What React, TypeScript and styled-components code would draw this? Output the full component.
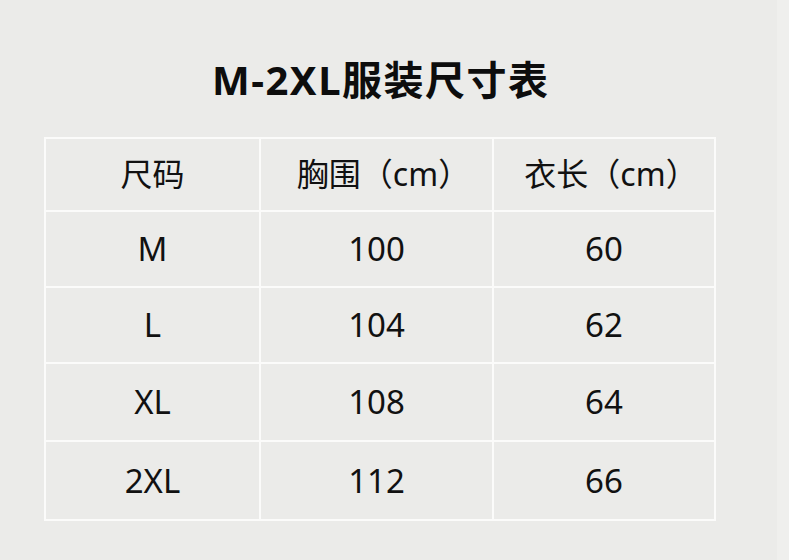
import React from "react";
import styled, { createGlobalStyle } from "styled-components";

const Global = createGlobalStyle`
  html, body {
    margin: 0;
    padding: 0;
    background: #ebebe9;
  }
  body {
    font-family: "Noto Sans", "Noto Sans CJK SC", sans-serif;
    color: #111;
  }
`;

const Page = styled.div`
  width: 789px;
  height: 560px;
  box-sizing: border-box;
  padding: 60px 0 0 44px;
  background: linear-gradient(to right, #ebebe9 0, #ebebe9 777px, #efefed 777px, #efefed 789px);
  overflow: hidden;
`;

const Sheet = styled.div`
  width: 672px;
  display: flex;
  flex-direction: column;
  align-items: center;
  gap: 37px;
`;

const Title = styled.h1`
  margin: 0;
  padding-left: 1.5px;
  font-family: "Noto Sans", "Noto Sans CJK SC", sans-serif;
  font-weight: 700;
  font-size: 40px;
  line-height: 40px;
  color: #0d0d0d;
  letter-spacing: 1.5px;
`;

const Table = styled.div`
  display: grid;
  grid-template-columns: 213px 231px 220px;
  grid-template-rows: 71px 74px 74px 76px 77px;
  gap: 2px;
  padding: 2px;
  background: #fbfbfa;
  width: 672px;
  box-sizing: border-box;
`;

const Cell = styled.div<{ $head?: boolean; $indent?: boolean }>`
  background: #ebebe9;
  display: flex;
  align-items: center;
  justify-content: center;
  padding-left: ${(p) => (p.$indent ? "14px" : "0")};
  font-size: ${(p) => (p.$head ? "32px" : "33px")};
  line-height: 1.2;
  font-weight: 400;
  color: #111;
`;

const headers = ["尺码", "胸围（cm）", "衣长（cm）"];
const rows = [
  ["M", "100", "60"],
  ["L", "104", "62"],
  ["XL", "108", "64"],
  ["2XL", "112", "66"],
];

export default function App() {
  return (
    <>
      <Global />
      <Page>
        <Sheet>
          <Title>M-2XL服装尺寸表</Title>
          <Table>
            {headers.map((h) => (
              <Cell $head $indent={h.endsWith("）")} key={h}>
                {h}
              </Cell>
            ))}
            {rows.map((r) =>
              r.map((c, i) => <Cell key={r[0] + i}>{c}</Cell>)
            )}
          </Table>
        </Sheet>
      </Page>
    </>
  );
}
